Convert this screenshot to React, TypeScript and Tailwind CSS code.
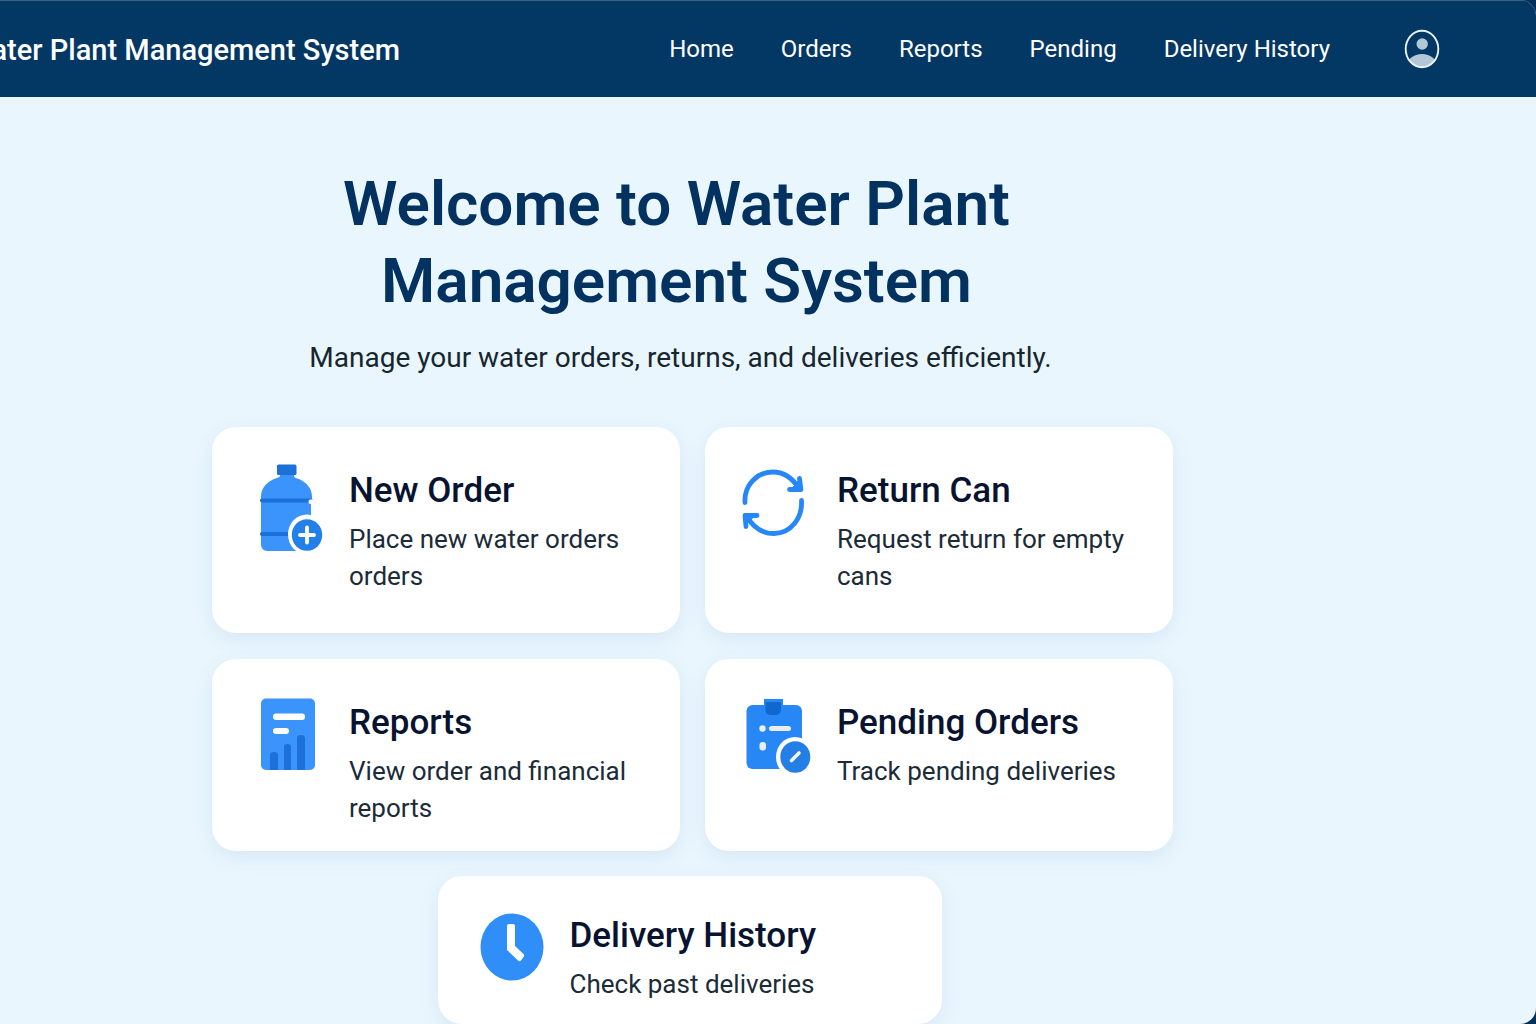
import type { ReactNode } from "react";

function UserIcon() {
  return (
    <svg width="36" height="40" viewBox="0 0 36 40" aria-hidden="true">
      <clipPath id="avatar">
        <ellipse cx="18" cy="20" rx="16.5" ry="18.5" />
      </clipPath>
      <ellipse cx="18" cy="37" rx="15" ry="12" fill="#b3c7d6" clipPath="url(#avatar)" />
      <circle cx="18.200" cy="15" r="5.700" fill="#b3c7d6" />
      <ellipse cx="18" cy="20" rx="16.300" ry="18.300" fill="none" stroke="#e9f3fa" strokeWidth="1.900" />
    </svg>
  );
}

function BottleIcon() {
  return (
    <svg width="66" height="90" viewBox="0 0 66 90" aria-hidden="true">
      <path d="M22 8h14v4c0 3 2 3 5 4c8 4 13 9 13 18v5l-1 2v41a6 6 0 0 1-6 6H9a6 6 0 0 1-6-6V34c0-9 5-14 13-18c4-2 6-1 6-4z" fill="#3b94fb" />
      <rect x="19" y="1.500" width="19.500" height="10.500" rx="1.500" fill="#1c70d8" />
      <path d="M4 37.500H53M4 71H38" stroke="#1c70d8" strokeWidth="4.200" strokeLinecap="round" />
      <rect x="50.500" y="36.500" width="7" height="4.500" rx="2" fill="#fff" />
      <ellipse cx="49" cy="71.500" rx="19" ry="20" fill="#fff" />
      <ellipse cx="49" cy="72" rx="15.200" ry="15.800" fill="#2380e8" />
      <path d="M49 64.500v15M42 72h14" stroke="#fff" strokeWidth="3.800" strokeLinecap="round" />
    </svg>
  );
}

function ReturnIcon() {
  return (
    <svg width="64" height="70" viewBox="0 0 64 70" fill="none" stroke="#2687fa" strokeWidth="4.800" strokeLinecap="round" strokeLinejoin="round" aria-hidden="true">
      <path d="M4 34.500C3 18 15 4 32 4C43 4 51 10 57 19" />
      <path d="M58.500 10.500L60 21.500H48.500" />
      <path d="M60.500 32.500C61.500 50 50 65.500 33 65.500C21 65.500 12 59 6 48.500" />
      <path d="M5 58.500L4 47.500H16" />
      <path d="M60 21.500L51 20.500L58 12zM4 47.500L13 48.500L5 57z" fill="#2687fa" strokeWidth="1" />
    </svg>
  );
}

function ReportIcon() {
  return (
    <svg width="56" height="74" viewBox="0 0 56 74" aria-hidden="true">
      <rect x="1" y="1.500" width="54" height="71.500" rx="5" fill="#3b94fb" />
      <rect x="13" y="16.500" width="32" height="6.500" rx="3" fill="#fff" />
      <rect x="13" y="31" width="16" height="6" rx="3" fill="#fff" />
      <path d="M10 73V58q0-3 4-3t4 3v15zM24 73V50q0-3 3.500-3t3.500 3v23zM37 73V41q0-3 4-3t4 3v32z" fill="#1c70d8" />
    </svg>
  );
}

function PendingIcon() {
  return (
    <svg width="66" height="76" viewBox="0 0 66 76" aria-hidden="true">
      <rect x="1.500" y="8" width="55.500" height="64" rx="6" fill="#2687f5" />
      <path d="M19 2h19v9H19z" fill="#2687f5" />
      <path d="M20.500 5h15.500v8a5 5 0 0 1-5 5h-5.500a5 5 0 0 1-5-5z" fill="#1068ce" />
      <circle cx="17.500" cy="31.500" r="3.200" fill="#e9eef2" />
      <rect x="24" y="29" width="22" height="5" rx="2.500" fill="#e9eef2" />
      <rect x="14.500" y="45" width="6.500" height="8.500" rx="3" fill="#e9eef2" />
      <ellipse cx="50" cy="60" rx="19" ry="20" fill="#fff" />
      <ellipse cx="50.300" cy="60" rx="15" ry="15.800" fill="#237ee6" />
      <path d="M46.500 63.500L54 56" stroke="#f0f4f8" strokeWidth="3.600" strokeLinecap="round" />
    </svg>
  );
}

function ClockIcon() {
  return (
    <svg width="64" height="68" viewBox="0 0 64 68" aria-hidden="true">
      <ellipse cx="32" cy="34" rx="31.500" ry="33.500" fill="#2f8ef8" />
      <path d="M27 12.500q0-1.500 2-1.500h4q2 0 2 1.500V33l8.500 8q1.500 1.500 0 3l-2.500 3.500q-1.500 1.500-3 0L27 37z" fill="#fff" />
    </svg>
  );
}

type CardProps = { title: string; text: string; icon: ReactNode; className: string; iconClass: string };

function Card({ title, text, icon, className, iconClass }: CardProps) {
  return (
    <a href="#" className={`flex rounded-3xl bg-white shadow-[0_6px_20px_rgba(30,90,130,0.09)] ${className}`}>
      <span className={`shrink-0 ${iconClass}`}>{icon}</span>
      <div className="min-w-0">
        <h2 className="text-[35px] leading-[52px] font-medium text-[#08132f]">{title}</h2>
        <p className="mt-1 text-[26px] leading-[37px] text-[#1b2b38]">{text}</p>
      </div>
    </a>
  );
}

const links = ["Home", "Orders", "Reports", "Pending", "Delivery History"];

export default function App() {
  return (
    <div className="bg-[#06305c] font-['Roboto','Inter',sans-serif]">
      <div className="min-h-screen overflow-hidden rounded-r-2xl bg-[#e9f6fe]">
        <header className="flex h-[97px] items-center justify-between border-t border-[#3b6285] bg-[#033764] pr-24 text-white">
          <div className="flex w-[400px] justify-end overflow-hidden pt-0.5 text-[29px] leading-10 font-medium whitespace-nowrap">
            Water Plant Management System
          </div>
          <div className="flex items-center gap-[74px]">
            <nav className="flex gap-[47px] text-[24px] leading-8 whitespace-nowrap">
              {links.map((l) => (
                <a key={l} href="#">{l}</a>
              ))}
            </nav>
            <button type="button" aria-label="Account">
              <UserIcon />
            </button>
          </div>
        </header>
        <main className="ml-[212px] max-w-[961px] pt-[68px]">
          <div className="mr-8 text-center">
            <h1 className="text-[62px] leading-[77px] font-semibold text-[#033261]">
              Welcome to Water Plant
              <br />
              Management System
            </h1>
            <p className="ml-2 mt-5 text-[28px] leading-[38px] text-[#17262e]">
              Manage your water orders, returns, and deliveries efficiently.
            </p>
          </div>
          <div className="mt-[50px] grid grid-cols-2 gap-x-[25px] gap-y-[26px]">
            <Card title="New Order" text="Place new water orders orders" icon={<BottleIcon />} className="min-h-[206px] pt-[38px] pr-12 pl-[46px]" iconClass="-mt-0.5 w-[91px]" />
            <Card title="Return Can" text="Request return for empty cans" icon={<ReturnIcon />} className="min-h-[206px] pt-[38px] pr-8 pl-9" iconClass="w-24 pt-[3px]" />
            <Card title="Reports" text="View order and financial reports" icon={<ReportIcon />} className="min-h-[192px] pt-[38px] pr-8 pl-12" iconClass="w-[89px]" />
            <Card title="Pending Orders" text="Track pending deliveries" icon={<PendingIcon />} className="min-h-[192px] pt-[38px] pr-8 pl-10" iconClass="w-[92px]" />
          </div>
          <div className="mt-[25px] flex justify-center pr-1.5">
            <Card title="Delivery History" text="Check past deliveries" icon={<ClockIcon />} className="min-h-[148px] w-[504px] pt-[34px] pl-[42px]" iconClass="w-[90px] pt-[3px]" />
          </div>
        </main>
      </div>
    </div>
  );
}
